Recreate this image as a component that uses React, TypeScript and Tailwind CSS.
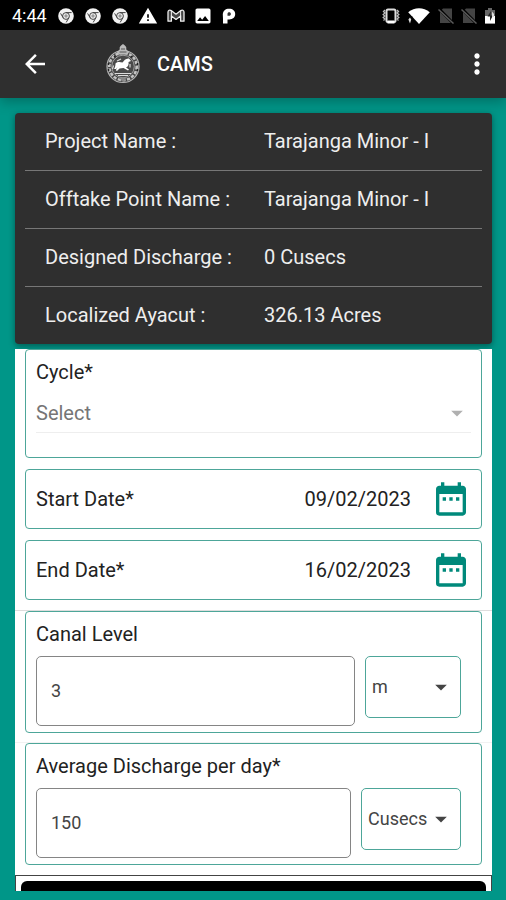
import { useState } from 'react'
import type { ReactNode } from 'react'
import { MdArrowBack, MdArrowDropDown, MdDateRange, MdImage, MdMoreVert, MdWarning } from 'react-icons/md'

const details = [
  { label: 'Project Name :', value: 'Tarajanga Minor - I' },
  { label: 'Offtake Point Name :', value: 'Tarajanga Minor - I' },
  { label: 'Designed Discharge :', value: '0 Cusecs' },
  { label: 'Localized Ayacut :', value: '326.13 Acres' },
]

function ChromeIcon() {
  return (
    <svg viewBox="0 0 16 16" className="size-4" aria-hidden="true">
      <circle cx="8" cy="8" r="7.8" fill="#f2f2f2" />
      <g fill="none" stroke="#444" strokeWidth="1">
        <circle cx="8" cy="8" r="3.4" />
        <path d="M8 4.6h5.6M5.1 9.7 2.6 5.4M10.9 9.7 8.2 14.4" />
      </g>
      <circle cx="8" cy="8" r="1.7" fill="#999" />
    </svg>
  )
}

function GmailIcon() {
  return (
    <svg viewBox="0 0 18 14" className="-mx-px h-3.5 w-[18px]" aria-hidden="true">
      <path
        d="M1 3v9.2h3.4V7L9 10.4 13.6 7v5.2H17V3c0-1.8-1.8-2.4-3.2-1.4L9 5.2 4.2 1.6C2.8.6 1 1.2 1 3z"
        fill="#444"
        stroke="#eee"
        strokeWidth="1.3"
        strokeLinejoin="round"
      />
      <path d="M4.4 7V2M13.6 7V2" stroke="#eee" strokeWidth="1" />
    </svg>
  )
}

function ParkingIcon() {
  return (
    <svg viewBox="0 0 14 16" className="h-4 w-3.5" aria-hidden="true">
      <path
        d="M1 15.5V11L.8 6.5C1 2.8 3.5.8 7 .8c3.800 0 6.200 2 6.200 5.200 0 3.300-2.400 5.400-6 5.400H5.500v4.100z"
        fill="#fff"
      />
      <path d="M5.500 8.500V5.800C5.500 4.700 6.200 4.200 7.200 4.200s1.700.6 1.700 1.700-.7 1.800-1.800 1.800H5.500" fill="#333" />
    </svg>
  )
}

function VibrateIcon() {
  return (
    <svg viewBox="0 0 18 16" className="h-4 w-[18px]" aria-hidden="true">
      <rect x="4.500" y="1.500" width="9" height="12.500" rx="1.500" fill="none" stroke="#ddd" strokeWidth="2" />
      <path d="M5.500 12.500h7v3h-7z" fill="#fff" />
      <path
        d="m3 2-1.500 1.500L3 5 1.200 6.500 2.800 8 1.200 9.500 3 11l-1.500 1.500M15 2l1.500 1.500L15 5l1.800 1.500L15.200 8l1.600 1.500L15 11l1.500 1.500"
        fill="none"
        stroke="#bbb"
        strokeWidth="1.300"
      />
    </svg>
  )
}

function WifiIcon() {
  return (
    <svg viewBox="0 0 24 18" className="h-[18px] w-6" aria-hidden="true">
      <path d="M12 17 1.2 5.2C7.5-.2 16.5-.2 22.8 5.2z" fill="#fff" />
      <path d="M0 9.5h5.500V17H0z" fill="#000" />
      <path d="m3 10.500 1.200 2L3 16.500l-1.600-4z" fill="#ddd" />
    </svg>
  )
}

function NoSimIcon() {
  return (
    <svg viewBox="0 0 16 16" className="size-4" aria-hidden="true">
      <path d="M5 .5h9V15H2V3.500z" fill="#444" />
      <path d="m0 0 16 16" stroke="#000" strokeWidth="3" />
      <path d="m.5 1.500 15 14" stroke="#5a5a5a" strokeWidth="1.500" />
    </svg>
  )
}

function BatteryIcon() {
  return (
    <svg viewBox="0 0 12 16" className="h-4 w-3" aria-hidden="true">
      <path d="M4 0h4v2h3v13.500H1V2h3z" fill="#666" />
      <path d="M1 8h10v7.500H1z" fill="#fff" />
      <path d="M7 3 3.500 8.500H6V13l3-5.500H6.500z" fill="#222" />
      <path d="m8 3.500 2 2.500v3H8z" fill="#ddd" />
    </svg>
  )
}

function Emblem() {
  return (
    <svg viewBox="0 0 36 40" className="h-10 w-9" aria-hidden="true">
      <circle cx="18" cy="22.500" r="16" fill="#474747" stroke="#b5b5b5" strokeWidth="1.200" />
      <circle cx="18" cy="22.500" r="13.700" fill="none" stroke="#c4c4c4" strokeWidth="2.600" strokeDasharray="3.200 1.500" />
      <circle cx="18" cy="22.500" r="11.300" fill="#4a4a4a" stroke="#aaa" strokeWidth="0.900" />
      <path d="M18 0c2.500 2 4 3 3.200 5.200l2.800 3.300-2 2h-8l-2-2 2.800-3.300C14 3 15.500 2 18 0z" fill="#bbb" />
      <path d="M16 5h4M14.500 8h7" stroke="#555" strokeWidth="1" />
      <path
        d="M9 25c1-1.500 1.500-3.500 1.500-5.500 2-2 4.500-1.500 7-1 1.500-2 3.500-4.500 6.500-4l2 2.500-2.500 1c.5 3-.5 4.500-2.500 5.500l3 2-1 1-4.500-2.500-4 .5-2.500 2.500-1.200-.8L12.500 23l-1.500 2z"
        fill="#fff"
      />
      <path d="m12 17 4-2M8.500 21.500 7.500 25M25 20v3.500" stroke="#ddd" strokeWidth="1.200" />
      <path d="M10 29.500h16M13 31.500h10" stroke="#ddd" strokeWidth="1.100" />
      <path d="M15 34c1-1 5-1 6 0l-1.500 3h-3z" fill="#888" />
      <path d="M3.500 19v2M3.500 25v2M32.500 19v2M32.500 25v2M9 12l1.500 1.500M27 12l-1.500 1.500" stroke="#222" strokeWidth="1.500" />
    </svg>
  )
}

function StatusBar() {
  return (
    <div className="flex h-[30px] items-center justify-between bg-black pl-3 pr-2.5 pt-px text-white">
      <div className="flex items-center gap-[11px]">
        <span className="text-[18px] leading-6">4:44</span>
        <ChromeIcon />
        <ChromeIcon />
        <ChromeIcon />
        <MdWarning className="-mx-px size-5" aria-hidden="true" />
        <GmailIcon />
        <MdImage className="-mx-0.5 size-5" aria-hidden="true" />
        <ParkingIcon />
      </div>
      <div className="flex items-center gap-[7px]">
        <VibrateIcon />
        <WifiIcon />
        <NoSimIcon />
        <NoSimIcon />
        <BatteryIcon />
      </div>
    </div>
  )
}

function FieldCard({ className = '', children }: { className?: string; children: ReactNode }) {
  return <div className={`rounded border border-[#4da699] bg-white pl-2.5 ${className}`}>{children}</div>
}

type DateFieldProps = {
  id: string
  label: string
  value: string
  onChange: (value: string) => void
}

function DateField({ id, label, value, onChange }: DateFieldProps) {
  return (
    <FieldCard className="flex items-center py-[9px] pr-2.5">
      <label htmlFor={id} className="shrink-0">
        {label}
      </label>
      <input
        id={id}
        value={value}
        onChange={(e) => onChange(e.target.value)}
        className="mr-5 min-w-0 flex-1 bg-transparent text-right outline-none"
      />
      <button type="button" aria-label={`Pick ${label}`} className="text-[#00897b]">
        <MdDateRange className="size-10" aria-hidden="true" />
      </button>
    </FieldCard>
  )
}

type MeasureFieldProps = {
  id: string
  label: string
  value: string
  onChange: (value: string) => void
  units: string[]
  unitWidth: string
}

function MeasureField({ id, label, value, onChange, units, unitWidth }: MeasureFieldProps) {
  return (
    <FieldCard className="pb-1.5 pr-5 pt-2.5">
      <label htmlFor={id} className="block">
        {label}
      </label>
      <div className="mt-2.5 flex items-start gap-2.5 text-[18px] text-[#444]">
        <input
          id={id}
          value={value}
          onChange={(e) => onChange(e.target.value)}
          className="min-w-0 flex-1 rounded-[5px] border border-[#858585] px-3.5 py-[22px] outline-none"
        />
        <div className={`relative ${unitWidth}`}>
          <select
            aria-label={`${label} unit`}
            className="w-full appearance-none rounded-[5px] border border-[#4da699] bg-white py-[18px] pl-1.5 outline-none"
          >
            {units.map((unit) => (
              <option key={unit}>{unit}</option>
            ))}
          </select>
          <MdArrowDropDown className="pointer-events-none absolute inset-y-0 right-1.5 my-auto size-7" aria-hidden="true" />
        </div>
      </div>
    </FieldCard>
  )
}

export default function App() {
  const [startDate, setStartDate] = useState('09/02/2023')
  const [endDate, setEndDate] = useState('16/02/2023')
  const [level, setLevel] = useState('3')
  const [discharge, setDischarge] = useState('150')

  return (
    <div className="min-h-screen bg-[#009688] font-[Roboto,sans-serif] text-[20px] leading-6 text-[#222]">
      <StatusBar />
      <header className="flex items-center bg-[#2f2f2f] py-3.5 pl-5 pr-[13px] text-white shadow-[0_4px_12px_rgba(0,0,0,0.25)]">
        <button type="button" aria-label="Back">
          <MdArrowBack className="size-[30px]" aria-hidden="true" />
        </button>
        <div className="ml-[55px]">
          <Emblem />
        </div>
        <h1 className="ml-4 flex-1 text-[20px] font-medium">CAMS</h1>
        <button type="button" aria-label="More options">
          <MdMoreVert className="size-8" aria-hidden="true" />
        </button>
      </header>

      <main className="pb-[9px] pl-[15px] pr-3.5 pt-[15px]">
        <dl className="divide-y divide-[#777] rounded bg-[#2f2f2f] px-2.5 text-[#eee] shadow-[0_2px_6px_rgba(0,0,0,0.4)]">
          {details.map((row) => (
            <div key={row.label} className="grid grid-cols-[219px_1fr] py-[17px] pl-5 leading-[23px]">
              <dt>{row.label}</dt>
              <dd>{row.value}</dd>
            </div>
          ))}
        </dl>

        <form className="mt-[5px] bg-white" onSubmit={(e) => e.preventDefault()}>
          <div className="flex flex-col gap-[11px] px-2.5 pb-2.5">
            <FieldCard className="pb-6 pr-2.5 pt-2.5">
              <label htmlFor="cycle" className="block">
                Cycle*
              </label>
              <div className="relative mt-[9px]">
                <select
                  id="cycle"
                  className="w-full appearance-none border-b border-[#eee] bg-transparent pb-[7px] pt-2 text-[#757575] outline-none"
                >
                  <option>Select</option>
                </select>
                <MdArrowDropDown
                  className="pointer-events-none absolute inset-y-0 right-0 my-auto size-7 text-[#b0b0b0]"
                  aria-hidden="true"
                />
              </div>
            </FieldCard>
            <DateField id="start" label="Start Date*" value={startDate} onChange={setStartDate} />
            <DateField id="end" label="End Date*" value={endDate} onChange={setEndDate} />
          </div>
          <div className="border-t border-[#ddd] px-2.5 pb-[9px]">
            <MeasureField id="level" label="Canal Level" value={level} onChange={setLevel} units={['m', 'ft']} unitWidth="w-24" />
          </div>
          <div className="border-t border-[#f2f2f2] px-2.5 pb-2.5">
            <MeasureField
              id="discharge"
              label="Average Discharge per day*"
              value={discharge}
              onChange={setDischarge}
              units={['Cusecs', 'Cumecs']}
              unitWidth="w-[100px]"
            />
          </div>
          <div className="border-x border-t border-[#444] px-[5px] pt-[5px]">
            <button type="submit" aria-label="Submit" className="block h-2.5 w-full rounded-t-md bg-black" />
          </div>
        </form>
      </main>
    </div>
  )
}
